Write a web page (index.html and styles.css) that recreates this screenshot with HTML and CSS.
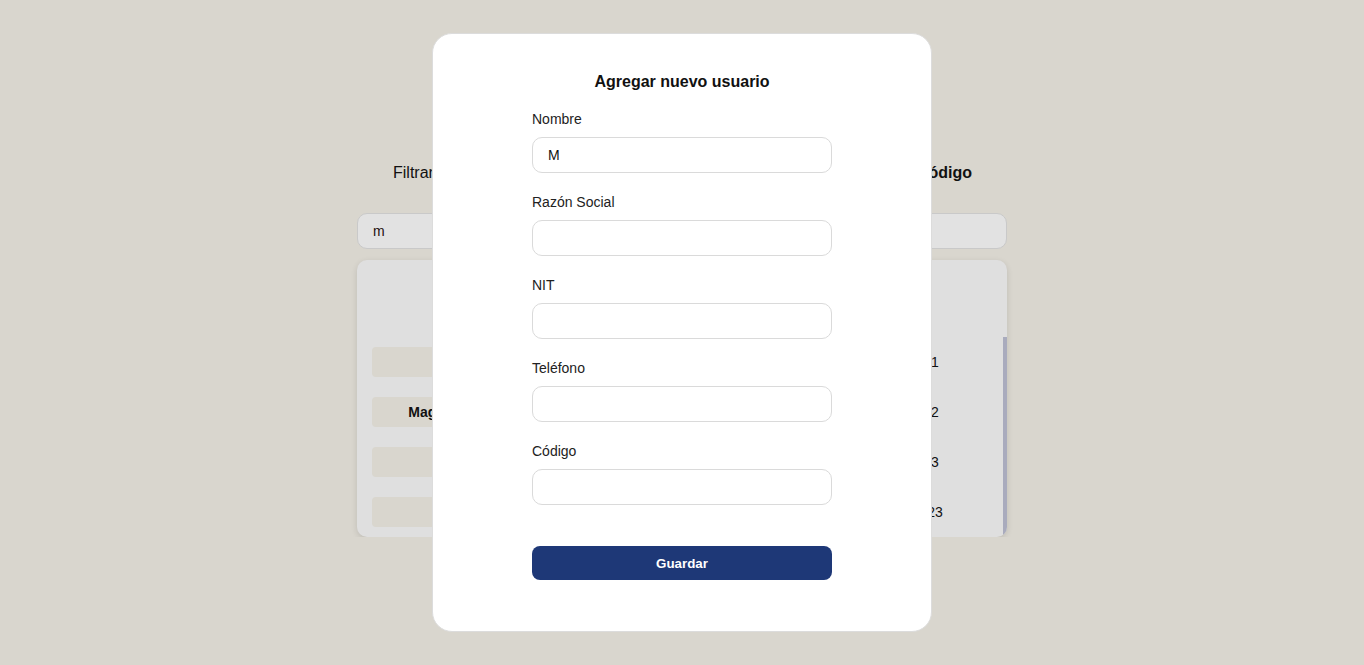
FILE: index.html
```html
<!DOCTYPE html>
<html lang="es">
<head>
  <meta charset="UTF-8">
  <meta name="viewport" content="width=device-width, initial-scale=1.0">
  <title>Usuarios</title>
  <link rel="stylesheet" href="styles.css">
</head>
<body>
<div class="page">
  <!-- Filter bar -->
  <div class="filters">
    <span>Filtrar por:</span>
    <span class="filter-active">Código</span>
  </div>
  <input class="search" type="text" value="m">

  <!-- Users table -->
  <div class="table-card">
    <div class="table-head"></div>
    <div class="table-body">
      <div class="row">
        <span class="cell-name"></span>
        <span></span>
        <span></span>
        <span class="col-code">1</span>
      </div>
      <div class="row">
        <span class="cell-name"><b>Magdalena</b></span>
        <span></span>
        <span></span>
        <span class="col-code">2</span>
      </div>
      <div class="row">
        <span class="cell-name"></span>
        <span></span>
        <span></span>
        <span class="col-code">3</span>
      </div>
      <div class="row">
        <span class="cell-name"></span>
        <span></span>
        <span></span>
        <span class="col-code">23</span>
      </div>
    </div>
  </div>
</div>

<!-- Add user modal -->
<div class="overlay">
  <form class="modal">
    <h2>Agregar nuevo usuario</h2>
    <div class="field">
      <label for="nombre">Nombre</label>
      <input id="nombre" type="text" value="M">
    </div>
    <div class="field">
      <label for="razon">Razón Social</label>
      <input id="razon" type="text">
    </div>
    <div class="field">
      <label for="nit">NIT</label>
      <input id="nit" type="text">
    </div>
    <div class="field">
      <label for="telefono">Teléfono</label>
      <input id="telefono" type="text">
    </div>
    <div class="field">
      <label for="codigo">Código</label>
      <input id="codigo" type="text">
    </div>
    <button type="button" class="save">Guardar</button>
  </form>
</div>
</body>
</html>
```

FILE: styles.css
```css
/* General */
body {
  font-family: 'Liberation Sans', Arial, sans-serif;
  margin: 0;
  background: #d9d6ce;
  color: #111;
}
.page {
  width: 650px;
  margin: 0 auto;
  padding-top: 164px;
}

/* Filter bar */
.filters {
  display: flex;
  justify-content: space-between;
  padding: 0 35px 0 36px;
  font-size: 16px;
  line-height: 18px;
  margin-bottom: 31px;
}
.filter-active {
  font-weight: bold;
}
.search {
  display: block;
  box-sizing: border-box;
  width: 650px;
  height: 36px;
  padding: 0 15px;
  font-family: inherit;
  font-size: 14px;
  color: #1e1010;
  background: #e2e2e2;
  border: 1px solid #c9c9c9;
  border-radius: 10px;
  margin-bottom: 11px;
  outline: none;
}

/* Table */
.table-card {
  background: #dfdfdf;
  border-radius: 10px;
  box-shadow: 0 2px 6px rgba(0, 0, 0, 0.12);
  overflow: hidden;
  height: 277px;
}
.table-head {
  height: 77px;
}
.table-body {
  display: flex;
  flex-direction: column;
  gap: 20px;
  box-sizing: border-box;
  height: 200px;
  border-right: 4px solid #a9abbd;
  padding: 10px 18px 0 15px;
}
.row {
  display: grid;
  grid-template-columns: 145px 1fr 1fr 100px;
  align-items: center;
  height: 30px;
  font-size: 14px;
}
.cell-name {
  background: #d9d6ce;
  border-radius: 4px;
  height: 30px;
  line-height: 30px;
  text-align: center;
}
.col-code {
  text-align: center;
}

/* Modal */
.overlay {
  position: fixed;
  inset: 0;
  display: flex;
  align-items: flex-start;
  justify-content: center;
  padding-top: 33px;
}
.modal {
  box-sizing: border-box;
  width: 500px;
  padding: 39px 99px 51px;
  background: #fff;
  border: 1px solid #dcdcdc;
  border-radius: 20px;
}
.modal h2 {
  margin: 0 0 20px;
  font-size: 16px;
  line-height: 18px;
  text-align: center;
  color: #111;
}
.field {
  margin-bottom: 21px;
}
.field label {
  display: block;
  font-size: 14px;
  line-height: 16px;
  color: #222;
  margin-bottom: 10px;
}
.field input {
  display: block;
  box-sizing: border-box;
  width: 100%;
  height: 36px;
  padding: 0 15px;
  font-family: inherit;
  font-size: 14px;
  color: #111;
  border: 1px solid #dadada;
  border-radius: 10px;
  outline: none;
}
.save {
  display: block;
  width: 100%;
  height: 34px;
  margin-top: 41px;
  background: #1e3877;
  color: #fff;
  font-family: inherit;
  font-size: 13.333px;
  font-weight: bold;
  border: none;
  border-radius: 8px;
  cursor: pointer;
}
```
